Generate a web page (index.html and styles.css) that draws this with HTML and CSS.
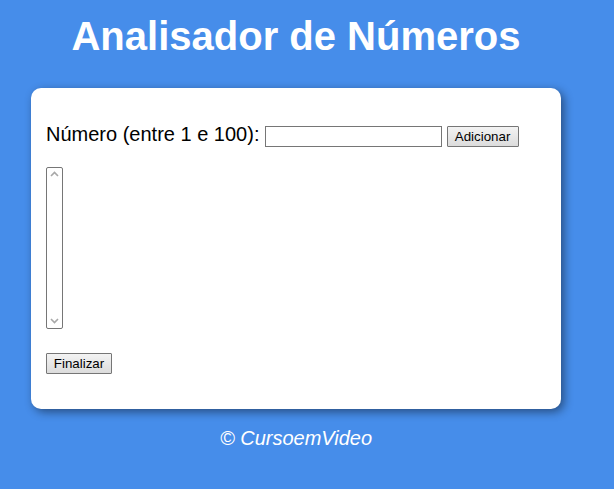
FILE: index.html
```html
<!DOCTYPE html>
<html lang="pt-br">
<head>
<meta charset="UTF-8">
<title>Analisador de Números</title>
<link rel="stylesheet" href="styles.css">
</head>
<body>
<div class="page">
  <header class="header">
    <h1 class="title">Analisador de Números</h1>
  </header>
  <section class="card">
    <p class="row">Número (entre 1 e 100): <input type="number" class="num-input"> <input type="button" value="Adicionar" class="btn btn-add"></p>
    <p class="row row-list"><span class="listbox"><select size="10" class="list"></select><svg class="arrow arrow-up" width="9" height="6" viewBox="0 0 9 6"><path d="M1 5 L4.5 1.5 L8 5" fill="none" stroke="#a8a8a8" stroke-width="1.6"/></svg><svg class="arrow arrow-down" width="9" height="6" viewBox="0 0 9 6"><path d="M1 1 L4.5 4.5 L8 1" fill="none" stroke="#a8a8a8" stroke-width="1.6"/></svg></span></p>
    <p class="row"><input type="button" value="Finalizar" class="btn btn-end"></p>
  </section>
  <footer class="footer">
    <p class="copy">&copy; CursoemVideo</p>
  </footer>
</div>
</body>
</html>
```

FILE: styles.css
```css
html, body {
  margin: 0;
  padding: 0;
}
body {
  background: #468dea;
  font-family: "Liberation Sans", Arial, sans-serif;
}
.page {
  width: 530px;
  margin-left: 31px;
  padding-top: 1px;
}
.title {
  margin: 13px 0 29px;
  color: #fff;
  font-size: 40px;
  font-weight: bold;
  text-align: center;
}
.card {
  background: #fff;
  border-radius: 10px;
  padding: 15px;
  box-shadow: 3px 3px 10px rgba(0, 0, 0, 0.45);
  font-size: 20px;
  color: #000;
}
.row {
  margin: 20px 0;
}
.row-list {
  margin-bottom: 21px;
}
.num-input {
  box-sizing: border-box;
  width: 177px;
  height: 21px;
  margin: 0;
  padding: 1px 2px;
  border: 1px solid #767676;
  border-radius: 0;
  background: #fff;
  font-family: "Liberation Sans", Arial, sans-serif;
  font-size: 13.33px;
  vertical-align: baseline;
  -moz-appearance: textfield;
  appearance: textfield;
}
.btn {
  box-sizing: border-box;
  height: 21px;
  margin: 0;
  padding: 1px 6px;
  border: 1px solid #767676;
  border-radius: 1px;
  background: linear-gradient(#f3f3f3, #dcdcdc);
  color: #000;
  font-family: "Liberation Sans", Arial, sans-serif;
  font-size: 13.33px;
  appearance: none;
}
.btn-add {
  width: 72px;
  margin-left: -1px;
}
.btn-end {
  width: 66px;
}
.listbox {
  position: relative;
  display: inline-block;
  width: 17px;
  height: 162px;
  vertical-align: top;
}
.list {
  box-sizing: border-box;
  display: block;
  width: 17px;
  height: 162px;
  margin: 0;
  padding: 0;
  border: 1px solid #767676;
  border-radius: 2px;
  background: #fff;
  overflow: hidden;
  appearance: none;
}
.arrow {
  position: absolute;
  left: 4px;
  display: block;
}
.arrow-up {
  top: 4px;
}
.arrow-down {
  bottom: 5px;
}
.footer {
  text-align: center;
  color: #fff;
}
.copy {
  margin: 18px 0;
  font-size: 20px;
  font-style: italic;
}
```
